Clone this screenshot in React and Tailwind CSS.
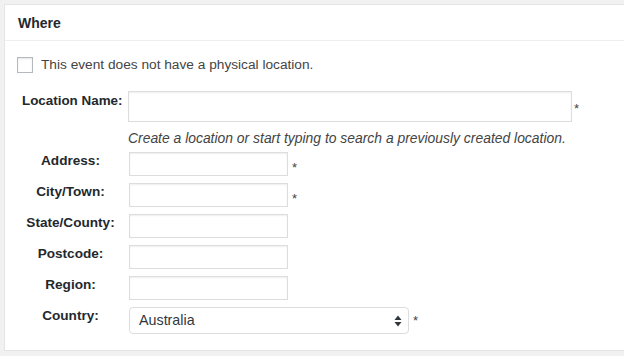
const fields = [
  { label: "Address:", required: true },
  { label: "City/Town:", required: true },
  { label: "State/County:", required: false },
  { label: "Postcode:", required: false },
  { label: "Region:", required: false },
];

const Asterisk = ({ className = "" }) => (
  <span className={"text-[13px] leading-none text-[#444] " + className}>*</span>
);

const App = () => {
  return (
    <div
      className="h-[356px] w-[624px] overflow-hidden bg-[#f1f1f1] pl-[4px] pt-[4px]"
      style={{ fontFamily: '"Liberation Sans", Arial, sans-serif' }}
    >
      <div className="h-[347px] w-[640px] border border-[#e5e5e5] bg-white">
        <div className="flex h-[36px] items-center border-b border-[#eee] pl-[13px] pt-[1px]">
          <h2 className="text-[14px] font-bold text-[#23282d]">Where</h2>
        </div>

        <div className="pl-[12px] pt-[16px]">
          <label className="flex items-center gap-[8px]">
            <span className="block h-[16px] w-[16px] border border-[#b4b9be] bg-white shadow-[inset_0_1px_2px_rgba(0,0,0,0.1)]" />
            <span className="text-[13.7px] leading-[16px] text-[#444]">
              This event does not have a physical location.
            </span>
          </label>
        </div>

        <div className="mt-[18px] flex items-start">
          <div className="w-[123px] pl-[17px] text-[13.4px] font-bold leading-[19px] text-[#23282d]">
            Location Name:
          </div>
          <div className="h-[31px] w-[444px] border border-[#ddd] bg-white shadow-[inset_0_1px_2px_rgba(0,0,0,0.07)]" />
          <Asterisk className="ml-[2px] mt-[11px]" />
        </div>

        <p className="mt-[8px] pl-[123px] text-[13.9px] italic leading-[16px] text-[#444]">
          Create a location or start typing to search a previously created location.
        </p>

        <div className="mt-[6px] flex flex-col gap-[7px]">
          {fields.map((field) => (
            <div key={field.label} className="flex items-start">
              <div className="w-[124px] pl-[7px] text-center text-[13.6px] font-bold leading-[18px] text-[#23282d]">
                {field.label}
              </div>
              <div className="h-[24px] w-[159px] border border-[#ddd] bg-white shadow-[inset_0_1px_2px_rgba(0,0,0,0.07)]" />
              {field.required && <Asterisk className="ml-[4px] mt-[9px]" />}
            </div>
          ))}

          <div className="flex items-start">
            <div className="w-[124px] pl-[7px] text-center text-[13.6px] font-bold leading-[18px] text-[#23282d]">
              Country:
            </div>
            <div className="flex h-[27px] w-[280px] items-center justify-between rounded-[4px] border border-[#ddd] bg-white pl-[9px] pr-[6px]">
              <span className="text-[14.3px] text-[#32373c]">Australia</span>
              <svg width="8" height="12" viewBox="0 0 8 12" fill="#32373c">
                <path d="M4 0.5 L7.5 5 L0.5 5 Z" />
                <path d="M4 11.5 L7.5 7 L0.5 7 Z" />
              </svg>
            </div>
            <Asterisk className="ml-[4px] mt-[7px]" />
          </div>
        </div>
      </div>
    </div>
  );
};

export default App;
